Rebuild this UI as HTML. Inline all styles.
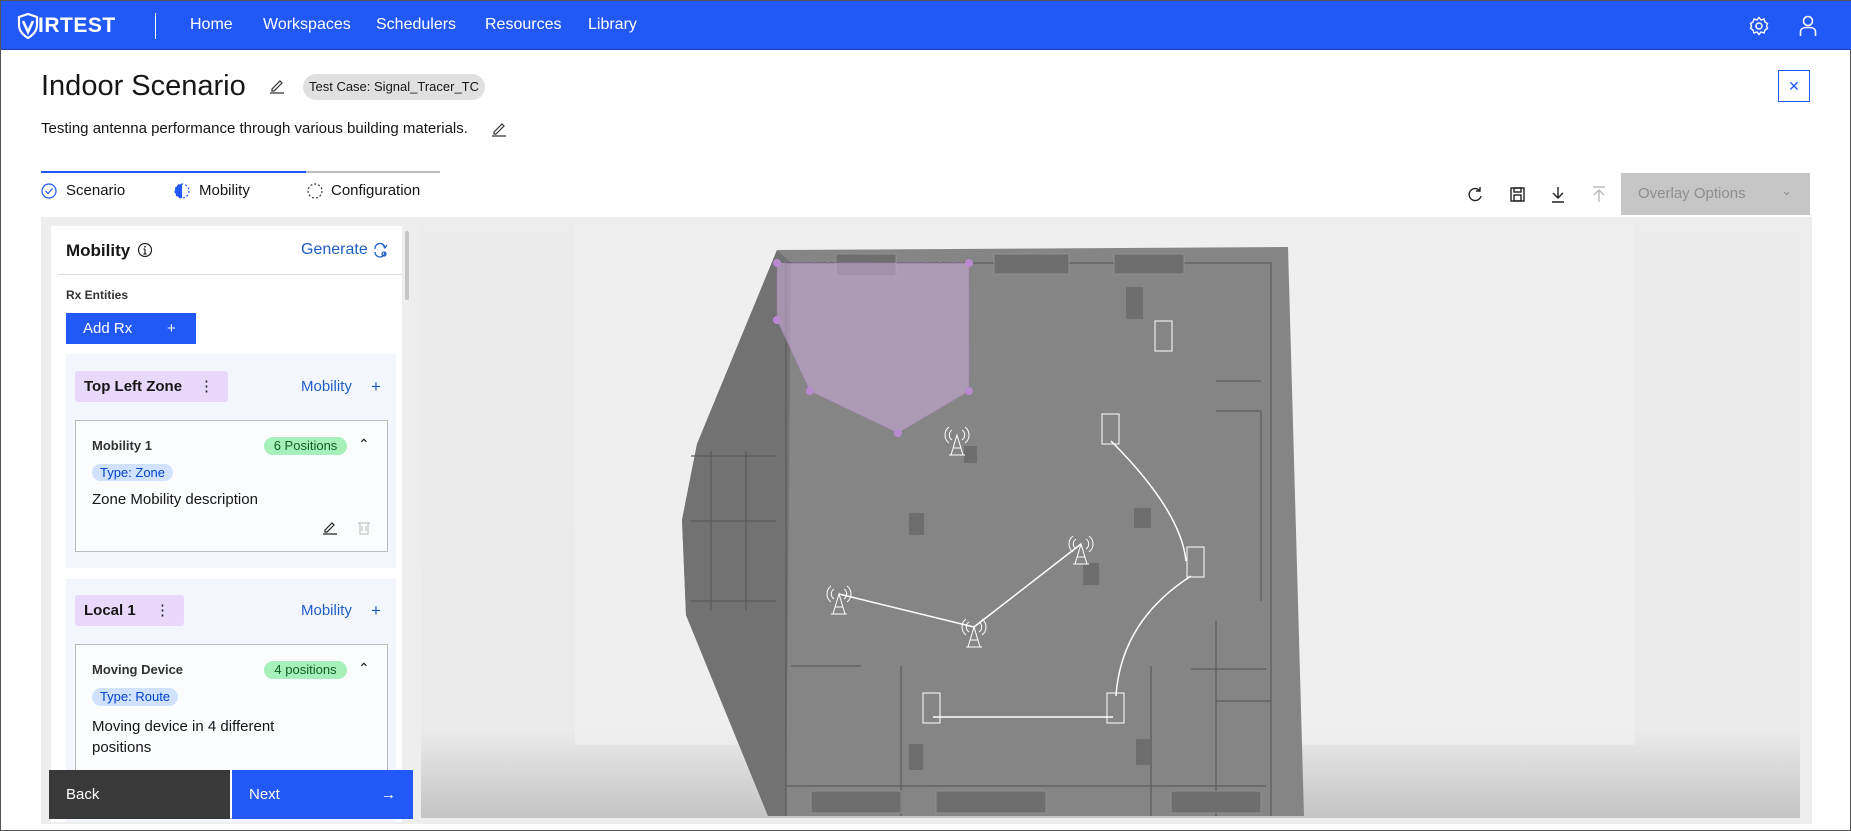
<!DOCTYPE html>
<html><head><meta charset="utf-8"><style>
*{box-sizing:border-box;margin:0;padding:0}
body{width:1851px;height:831px;overflow:hidden;background:#fff;font-family:"Liberation Sans",sans-serif;color:#161616;position:relative;border:1px solid #555}
.abs{position:absolute}
.nav{left:0;top:0;width:1851px;height:49px;background:#2258f6;border-bottom:1px solid #1a3fb0}
.nav .it{position:absolute;top:15px;color:#fff;font-size:16px}
.blue{color:#1f5fc4}
.tag{background:#e8d9fb;border-radius:3px;font-weight:bold;font-size:15px}
.pill{border-radius:9px;font-size:13px;text-align:center}
</style></head><body>
<div class="abs nav">
 <svg class="abs" style="left:16px;top:12px" width="22" height="26" viewBox="0 0 22 26"><path d="M11 1 L20 4 V12 C20 18 16 22 11 25 C6 22 2 18 2 12 V4 Z" fill="none" stroke="#fff" stroke-width="2.2"/><path d="M6 8 L11 19 L16 8" fill="none" stroke="#fff" stroke-width="2.6"/></svg>
 <div class="abs" style="left:37px;top:13px;color:#fff;font-weight:bold;font-size:21px;letter-spacing:0.5px">IRTEST</div>
 <div class="abs" style="left:154px;top:12px;width:1px;height:26px;background:#fff"></div>
 <div class="it" style="left:189px">Home</div>
 <div class="it" style="left:262px">Workspaces</div>
 <div class="it" style="left:375px">Schedulers</div>
 <div class="it" style="left:484px">Resources</div>
 <div class="it" style="left:587px">Library</div>
 <svg class="abs" style="left:1748px;top:15px" width="20" height="20" viewBox="0 0 20 20"><circle cx="10" cy="10" r="3" fill="none" stroke="#fff" stroke-width="1.5"/><path d="M10 1.5 L12 4 L15 3 L16 6 L18.5 7.5 L17.5 10 L18.5 12.5 L16 14 L15 17 L12 16 L10 18.5 L8 16 L5 17 L4 14 L1.5 12.5 L2.5 10 L1.5 7.5 L4 6 L5 3 L8 4 Z" fill="none" stroke="#fff" stroke-width="1.4"/></svg>
 <svg class="abs" style="left:1798px;top:14px" width="18" height="22" viewBox="0 0 18 22"><circle cx="9" cy="6" r="4.5" fill="none" stroke="#fff" stroke-width="1.6"/><path d="M1.5 21 V17 C1.5 14 4 12.5 7 12.5 H11 C14 12.5 16.5 14 16.5 17 V21" fill="none" stroke="#fff" stroke-width="1.6"/></svg>
</div>

<div class="abs" style="left:40px;top:69px;font-size:29px">Indoor Scenario</div>
<svg class="abs" style="left:268px;top:77px" width="16" height="16" viewBox="0 0 16 16"><path d="M3 11 L11 3 L13 5 L5 13 H3 Z M1 15 H15" fill="none" stroke="#333" stroke-width="1.2"/></svg>
<div class="abs" style="left:302px;top:73px;width:182px;height:26px;background:#e0e0e0;border-radius:13px;font-size:13px;line-height:26px;text-align:center">Test Case: Signal_Tracer_TC</div>
<div class="abs" style="left:40px;top:119px;font-size:15px">Testing antenna performance through various building materials.</div>
<svg class="abs" style="left:490px;top:120px" width="16" height="16" viewBox="0 0 16 16"><path d="M3 11 L11 3 L13 5 L5 13 H3 Z M1 15 H15" fill="none" stroke="#333" stroke-width="1.2"/></svg>

<div class="abs" style="left:40px;top:170px;width:265px;height:2px;background:#2258f6"></div>
<div class="abs" style="left:305px;top:170px;width:134px;height:2px;background:#bbb"></div>
<svg class="abs" style="left:40px;top:182px" width="16" height="16"><circle cx="8" cy="8" r="7" fill="none" stroke="#2258f6" stroke-width="1.2"/><path d="M4.5 8 L7 10.5 L11.5 5.5" fill="none" stroke="#2258f6" stroke-width="1.2"/></svg>
<div class="abs" style="left:65px;top:181px;font-size:15px">Scenario</div>
<svg class="abs" style="left:173px;top:182px" width="16" height="16"><path d="M8 1 A7 7 0 0 0 8 15 Z" fill="#2258f6"/><circle cx="8" cy="8" r="7" fill="none" stroke="#2258f6" stroke-width="1.2" stroke-dasharray="2 2"/></svg>
<div class="abs" style="left:198px;top:181px;font-size:15px">Mobility</div>
<svg class="abs" style="left:306px;top:182px" width="16" height="16"><circle cx="8" cy="8" r="7" fill="none" stroke="#333" stroke-width="1.2" stroke-dasharray="2 2"/></svg>
<div class="abs" style="left:330px;top:181px;font-size:15px">Configuration</div>

<div class="abs" style="left:1777px;top:69px;width:32px;height:32px;border:1px solid #2258f6;color:#2258f6;text-align:center;line-height:30px;font-size:14px">✕</div>

<svg class="abs" style="left:1464px;top:184px" width="150" height="20" viewBox="0 0 150 20" fill="none" stroke="#222" stroke-width="1.4">
 <path d="M15 6 A6 6 0 1 0 16 11 M15 2 V6 H11"/>
 <rect x="46" y="3" width="13" height="13"/><rect x="49" y="10" width="7" height="6"/><rect x="49" y="3" width="7" height="4"/>
 <path d="M93 2 V13 M88 8 L93 13 L98 8 M87 17 H99"/>
 <path d="M134 17 V6 M129 10 L134 5 L139 10 M128 2 H140" stroke="#bbb"/>
</svg>
<div class="abs" style="left:1620px;top:172px;width:189px;height:42px;background:#c6c6c6;color:#8d8d8d;font-size:15px;line-height:42px;padding-left:17px">Overlay Options<span style="position:absolute;right:18px;top:-3px;font-size:13px">&#8964;</span></div>

<div class="abs" style="left:40px;top:216px;width:1771px;height:607px;background:#eeeeee"></div>
<div class="abs" style="left:50px;top:225px;width:351px;height:596px;background:#fff"></div>
<div class="abs" style="left:404px;top:230px;width:4px;height:69px;background:#c6c6c6;border-radius:2px"></div>
<div class="abs" style="left:65px;top:240px;font-size:17px;font-weight:bold">Mobility</div>
<svg class="abs" style="left:136px;top:241px" width="16" height="16"><circle cx="8" cy="8" r="6.5" fill="none" stroke="#222" stroke-width="1.2"/><path d="M8 7 V12 M6.5 12 H9.5 M6.5 7 H8" stroke="#222" stroke-width="1.2"/><circle cx="8" cy="4.8" r="0.9" fill="#222"/></svg>
<div class="abs blue" style="left:300px;top:240px;font-size:16px">Generate</div>
<svg class="abs" style="left:371px;top:241px" width="16" height="16" fill="none" stroke="#1f5fc4" stroke-width="1.3"><path d="M3 7 A5 5 0 0 1 13 6 M11 3 L13 6 L15 3 M13 10 A5 5 0 0 1 3 10"/><circle cx="12" cy="12" r="2"/></svg>
<div class="abs" style="left:57px;top:273px;width:344px;height:1px;background:#ddd"></div>
<div class="abs" style="left:65px;top:287px;font-size:12px;font-weight:bold;color:#333">Rx Entities</div>
<div class="abs" style="left:65px;top:312px;width:130px;height:31px;background:#2258f6;color:#fff;font-size:15px;line-height:31px;padding-left:17px">Add Rx<span style="position:absolute;left:101px">+</span></div>

<div class="abs" style="left:65px;top:353px;width:330px;height:214px;background:#f3f7fd"></div>
<div class="abs tag" style="left:74px;top:370px;width:153px;height:31px;line-height:31px;padding-left:9px">Top Left Zone<span style="position:absolute;left:124px;font-weight:normal">⋮</span></div>
<div class="abs blue" style="left:300px;top:377px;font-size:15px">Mobility<span style="position:absolute;left:70px;top:-1px;font-size:17px">+</span></div>
<div class="abs" style="left:74px;top:419px;width:313px;height:132px;border:1px solid #bbb;background:#fafcfe"></div>
<div class="abs" style="left:91px;top:437px;font-size:13px;font-weight:bold;color:#333">Mobility 1</div>
<div class="abs pill" style="left:263px;top:436px;width:83px;height:18px;line-height:18px;background:#a7f0ba;color:#0e6027">6 Positions</div>
<div class="abs" style="left:357px;top:435px;font-size:14px">&#8963;</div>
<div class="abs pill" style="left:91px;top:463px;width:81px;height:17px;line-height:17px;background:#d0e2ff;color:#0043ce">Type: Zone</div>
<div class="abs" style="left:91px;top:490px;font-size:15px">Zone Mobility description</div>
<svg class="abs" style="left:321px;top:518px" width="50" height="16" fill="none" stroke-width="1.2"><path d="M3 11 L10 4 L12 6 L5 13 H3 Z M1 15 H15" stroke="#222"/><path d="M36 4 H48 M38 4 V15 H46 V4 M40 7 V12 M44 7 V12" stroke="#c6c6c6"/></svg>

<div class="abs" style="left:65px;top:578px;width:330px;height:243px;background:#f3f7fd"></div>
<div class="abs tag" style="left:74px;top:594px;width:109px;height:31px;line-height:31px;padding-left:9px">Local 1<span style="position:absolute;left:80px;font-weight:normal">⋮</span></div>
<div class="abs blue" style="left:300px;top:601px;font-size:15px">Mobility<span style="position:absolute;left:70px;top:-1px;font-size:17px">+</span></div>
<div class="abs" style="left:74px;top:643px;width:313px;height:175px;border:1px solid #bbb;background:#fafcfe"></div>
<div class="abs" style="left:91px;top:661px;font-size:13px;font-weight:bold;color:#333">Moving Device</div>
<div class="abs pill" style="left:263px;top:660px;width:83px;height:18px;line-height:18px;background:#a7f0ba;color:#0e6027">4 positions</div>
<div class="abs" style="left:357px;top:659px;font-size:14px">&#8963;</div>
<div class="abs pill" style="left:91px;top:687px;width:86px;height:18px;line-height:18px;background:#d0e2ff;color:#0043ce">Type: Route</div>
<div class="abs" style="left:91px;top:715px;font-size:15px;line-height:21px">Moving device in 4 different<br>positions</div>

<div class="abs" style="left:48px;top:769px;width:181px;height:49px;background:#393939;color:#fff;font-size:15px;line-height:49px;padding-left:17px">Back</div>
<div class="abs" style="left:231px;top:769px;width:181px;height:49px;background:#2258f6;color:#fff;font-size:15px;line-height:49px;padding-left:17px">Next<span style="position:absolute;right:17px">→</span></div>

<svg class="abs" style="left:420px;top:224px" width="1379" height="593" viewBox="420 224 1379 593">
 <defs>
  <linearGradient id="bg" x1="0" y1="0" x2="0" y2="1"><stop offset="0" stop-color="#ececec"/><stop offset="0.85" stop-color="#ebebeb"/><stop offset="1" stop-color="#c4c4c4"/></linearGradient>
 </defs>
 <rect x="420" y="224" width="1379" height="593" fill="url(#bg)"/>
 <rect x="574" y="224" width="1060" height="520" fill="#f1f1f1" opacity="0.6"/>
 <polygon points="776,249 1287,246 1303,815 767,815 685,614 681,519 696,443" fill="#858585"/>
 <polygon points="776,249 790,262 785,815 767,815 685,614 681,519 696,443" fill="#727272"/>
 <g stroke="#5c5c5c" stroke-width="1.2" fill="none">
  <path d="M785 262 H1270 V815"/>
  <path d="M785 262 V815"/>
  <path d="M690 455 H775 M690 520 H775 M690 600 H775 M710 450 V610 M745 450 V610"/>
  <path d="M1215 380 H1260 M1215 410 H1260 V600 M1215 620 V815 M1215 700 H1270"/>
  <path d="M790 665 H860 M900 665 V815 M1150 665 V815 M1190 668 H1265"/>
  <path d="M785 785 H1265"/>
 </g>
 <g fill="#6e6e6e">
  <rect x="1125" y="286" width="17" height="32"/><rect x="908" y="512" width="15" height="22"/><rect x="1133" y="507" width="17" height="20"/>
  <rect x="1082" y="562" width="16" height="22"/><rect x="963" y="445" width="13" height="17"/><rect x="1135" y="738" width="14" height="26"/><rect x="908" y="743" width="14" height="26"/>
 </g>
 <g fill="#6e6e6e" stroke="#9a9a9a" stroke-width="0.7">
  <rect x="835" y="253" width="60" height="22"/><rect x="993" y="253" width="75" height="20"/><rect x="1113" y="253" width="70" height="20"/>
  <rect x="810" y="790" width="90" height="22"/><rect x="935" y="790" width="110" height="22"/><rect x="1170" y="790" width="90" height="22"/>
 </g>
 <polygon points="776,262 968,262 968,390 897,432 809,390 776,319" fill="#c9a9d6" opacity="0.6" stroke="#b083c8" stroke-dasharray="4 3"/>
 <g fill="#b88bd0"><circle cx="776" cy="262" r="4"/><circle cx="968" cy="262" r="4"/><circle cx="968" cy="390" r="4"/><circle cx="897" cy="432" r="4"/><circle cx="809" cy="390" r="4"/><circle cx="776" cy="319" r="4"/></g>
 <g stroke="#fff" stroke-width="1.5" fill="none">
  <path d="M838 593 L973 626 L1080 543"/>
  <path d="M1110 440 Q1180 510 1185 560 M1190 575 Q1120 620 1115 695"/>
  <path d="M932 716 H1112"/>
 </g>
 <g stroke="#fff" stroke-width="1" fill="none">
  <g id="tw"><path d="M-6 20 L0 0 L6 20 M-4 13 H4 M-8 20 H8"/><path d="M-5 -5 A6 6 0 0 0 -5 5 M5 -5 A6 6 0 0 1 5 5 M-8 -8 A10 10 0 0 0 -8 8 M8 -8 A10 10 0 0 1 8 8"/></g>
 </g>
 <g stroke="#fff" stroke-width="1" fill="none">
  <use href="#tw" x="956" y="434"/><use href="#tw" x="1080" y="543"/><use href="#tw" x="838" y="593"/><use href="#tw" x="973" y="626"/>
  <rect x="1154" y="320" width="17" height="30"/><rect x="1101" y="413" width="17" height="30"/><rect x="1186" y="546" width="17" height="30"/><rect x="922" y="692" width="17" height="30"/><rect x="1106" y="692" width="17" height="30"/>
 </g>
</svg>
</body></html>
